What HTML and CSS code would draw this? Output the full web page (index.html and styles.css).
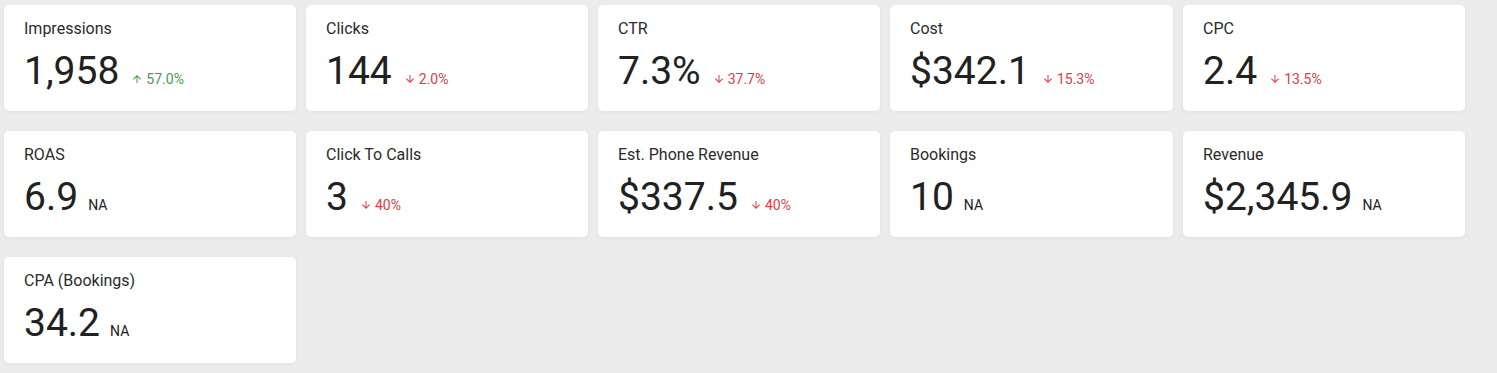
FILE: index.html
```html
<!DOCTYPE html>
<html lang="en">
<head>
  <meta charset="UTF-8">
  <title>KPI Overview</title>
  <link rel="stylesheet" href="styles.css">
</head>
<body>

  <!-- KPI CARDS -->
  <div class="kpi-grid">
    <div class="kpi-card">
      <div class="kpi-title">Impressions</div>
      <div class="kpi-row">
        <span class="kpi-value">1,958</span>
        <span class="kpi-change up"><svg viewBox="0 0 24 24"><path d="M4 12l1.41 1.41L11 7.83V20h2V7.83l5.58 5.59L20 12l-8-8-8 8z"/></svg>57.0%</span>
      </div>
    </div>
    <div class="kpi-card">
      <div class="kpi-title">Clicks</div>
      <div class="kpi-row">
        <span class="kpi-value">144</span>
        <span class="kpi-change down"><svg viewBox="0 0 24 24"><path d="M20 12l-1.41-1.41L13 16.17V4h-2v12.17l-5.58-5.59L4 12l8 8 8-8z"/></svg>2.0%</span>
      </div>
    </div>
    <div class="kpi-card">
      <div class="kpi-title">CTR</div>
      <div class="kpi-row">
        <span class="kpi-value">7.3%</span>
        <span class="kpi-change down"><svg viewBox="0 0 24 24"><path d="M20 12l-1.41-1.41L13 16.17V4h-2v12.17l-5.58-5.59L4 12l8 8 8-8z"/></svg>37.7%</span>
      </div>
    </div>
    <div class="kpi-card">
      <div class="kpi-title">Cost</div>
      <div class="kpi-row">
        <span class="kpi-value">$342.1</span>
        <span class="kpi-change down"><svg viewBox="0 0 24 24"><path d="M20 12l-1.41-1.41L13 16.17V4h-2v12.17l-5.58-5.59L4 12l8 8 8-8z"/></svg>15.3%</span>
      </div>
    </div>
    <div class="kpi-card">
      <div class="kpi-title">CPC</div>
      <div class="kpi-row">
        <span class="kpi-value">2.4</span>
        <span class="kpi-change down"><svg viewBox="0 0 24 24"><path d="M20 12l-1.41-1.41L13 16.17V4h-2v12.17l-5.58-5.59L4 12l8 8 8-8z"/></svg>13.5%</span>
      </div>
    </div>

    <div class="kpi-card">
      <div class="kpi-title">ROAS</div>
      <div class="kpi-row">
        <span class="kpi-value">6.9</span>
        <span class="kpi-change na">NA</span>
      </div>
    </div>
    <div class="kpi-card">
      <div class="kpi-title">Click To Calls</div>
      <div class="kpi-row">
        <span class="kpi-value">3</span>
        <span class="kpi-change down"><svg viewBox="0 0 24 24"><path d="M20 12l-1.41-1.41L13 16.17V4h-2v12.17l-5.58-5.59L4 12l8 8 8-8z"/></svg>40%</span>
      </div>
    </div>
    <div class="kpi-card">
      <div class="kpi-title">Est. Phone Revenue</div>
      <div class="kpi-row">
        <span class="kpi-value">$337.5</span>
        <span class="kpi-change down"><svg viewBox="0 0 24 24"><path d="M20 12l-1.41-1.41L13 16.17V4h-2v12.17l-5.58-5.59L4 12l8 8 8-8z"/></svg>40%</span>
      </div>
    </div>
    <div class="kpi-card">
      <div class="kpi-title">Bookings</div>
      <div class="kpi-row">
        <span class="kpi-value">10</span>
        <span class="kpi-change na">NA</span>
      </div>
    </div>
    <div class="kpi-card">
      <div class="kpi-title">Revenue</div>
      <div class="kpi-row">
        <span class="kpi-value">$2,345.9</span>
        <span class="kpi-change na">NA</span>
      </div>
    </div>

    <div class="kpi-card">
      <div class="kpi-title">CPA (Bookings)</div>
      <div class="kpi-row">
        <span class="kpi-value">34.2</span>
        <span class="kpi-change na">NA</span>
      </div>
    </div>
  </div>

</body>
</html>
```

FILE: styles.css
```css
body {
  background: #ececec;
  color: #212121;
  font-family: 'Roboto', sans-serif;
  margin: 0;
  padding: 5px 4px;
}
.kpi-grid {
  display: grid;
  grid-template-columns: 292px 282px 282px 283px 282px;
  column-gap: 10px;
  row-gap: 20px;
}
.kpi-card {
  background: #fff;
  border-radius: 5px;
  box-shadow: 0 1px 4px rgba(0, 0, 0, 0.05);
  height: 106px;
  box-sizing: border-box;
  padding: 14px 20px;
}
.kpi-title {
  font-size: 16px;
  line-height: 19px;
  color: #2b2b2b;
}
.kpi-row {
  display: flex;
  align-items: baseline;
  margin-top: 9px;
}
.kpi-value {
  font-size: 39px;
  line-height: 48px;
  color: #212121;
}
.kpi-change {
  font-size: 14px;
  margin-left: 12px;
}
.kpi-change svg {
  width: 12px;
  height: 12px;
  margin-right: 3px;
  fill: currentColor;
  vertical-align: -1px;
}
.up { color: #43a047; }
.down { color: #e53945; }
.na { color: #212121; margin-left: 10px; }
```
